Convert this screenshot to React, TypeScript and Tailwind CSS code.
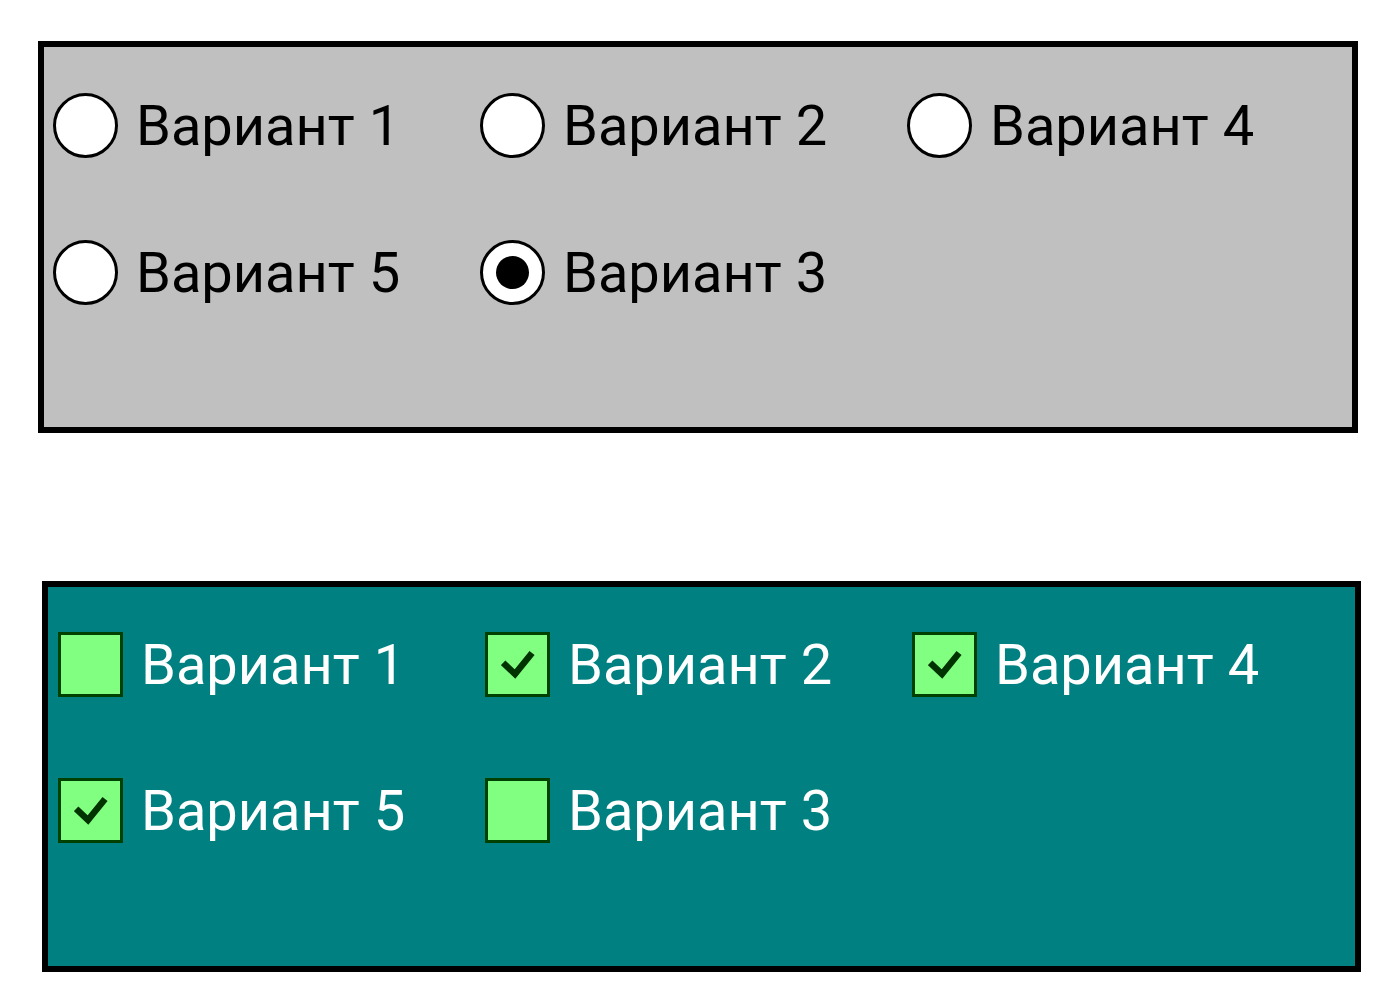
import { useState } from "react";

const options = [
    { id: 1, label: "Вариант 1" },
    { id: 2, label: "Вариант 2" },
    { id: 4, label: "Вариант 4" },
    { id: 5, label: "Вариант 5" },
    { id: 3, label: "Вариант 3" },
];

function Radio({ checked }: { checked: boolean }) {
    return (
        <span className="flex h-[65px] w-[65px] shrink-0 items-center justify-center rounded-full border-[3px] border-black bg-white">
            {checked && <span className="h-[33px] w-[33px] rounded-full bg-black"></span>}
        </span>
    );
}

function Checkbox({ checked }: { checked: boolean }) {
    return (
        <span className="flex h-[65px] w-[65px] shrink-0 items-center justify-center border-[3px] border-[#004000] bg-[#80ff80]">
            {checked && (
                <svg width="34" height="30" viewBox="0 0 34 30">
                    <path
                        d="M4.5 15 L14 24 L29 5.5"
                        fill="none"
                        stroke="#003300"
                        strokeWidth="6.5"
                        strokeLinecap="square"
                    />
                </svg>
            )}
        </span>
    );
}

export default function App() {
    const [selected, setSelected] = useState(3);
    const [checked, setChecked] = useState<number[]>([2, 4, 5]);

    const toggle = (id: number) =>
        setChecked((c) => (c.includes(id) ? c.filter((x) => x !== id) : [...c, id]));

    return (
        <div className="min-h-[1008px] w-[1400px] bg-white pt-[41px] font-['Roboto',sans-serif]">
            <div className="ml-[38px] h-[392px] w-[1320px] border-[6px] border-black bg-[#c0c0c0]">
                <div className="grid grid-cols-[427px_427px_427px] gap-y-[82px] pl-[9px] pt-[46px]">
                    {options.map((o) => (
                        <label
                            key={o.id}
                            className="flex h-[65px] cursor-pointer items-center gap-[18px] text-[56px] leading-none text-black"
                            onClick={() => setSelected(o.id)}
                        >
                            <Radio checked={selected === o.id} />
                            <span>{o.label}</span>
                        </label>
                    ))}
                </div>
            </div>

            <div className="ml-[42px] mt-[148px] h-[391px] w-[1319px] border-[6px] border-black bg-[#008080]">
                <div className="grid grid-cols-[427px_427px_427px] gap-y-[81px] pl-[10px] pt-[45px]">
                    {options.map((o) => (
                        <label
                            key={o.id}
                            className="flex h-[65px] cursor-pointer items-center gap-[18px] text-[56px] leading-none text-white"
                            onClick={() => toggle(o.id)}
                        >
                            <Checkbox checked={checked.includes(o.id)} />
                            <span>{o.label}</span>
                        </label>
                    ))}
                </div>
            </div>
        </div>
    );
}
